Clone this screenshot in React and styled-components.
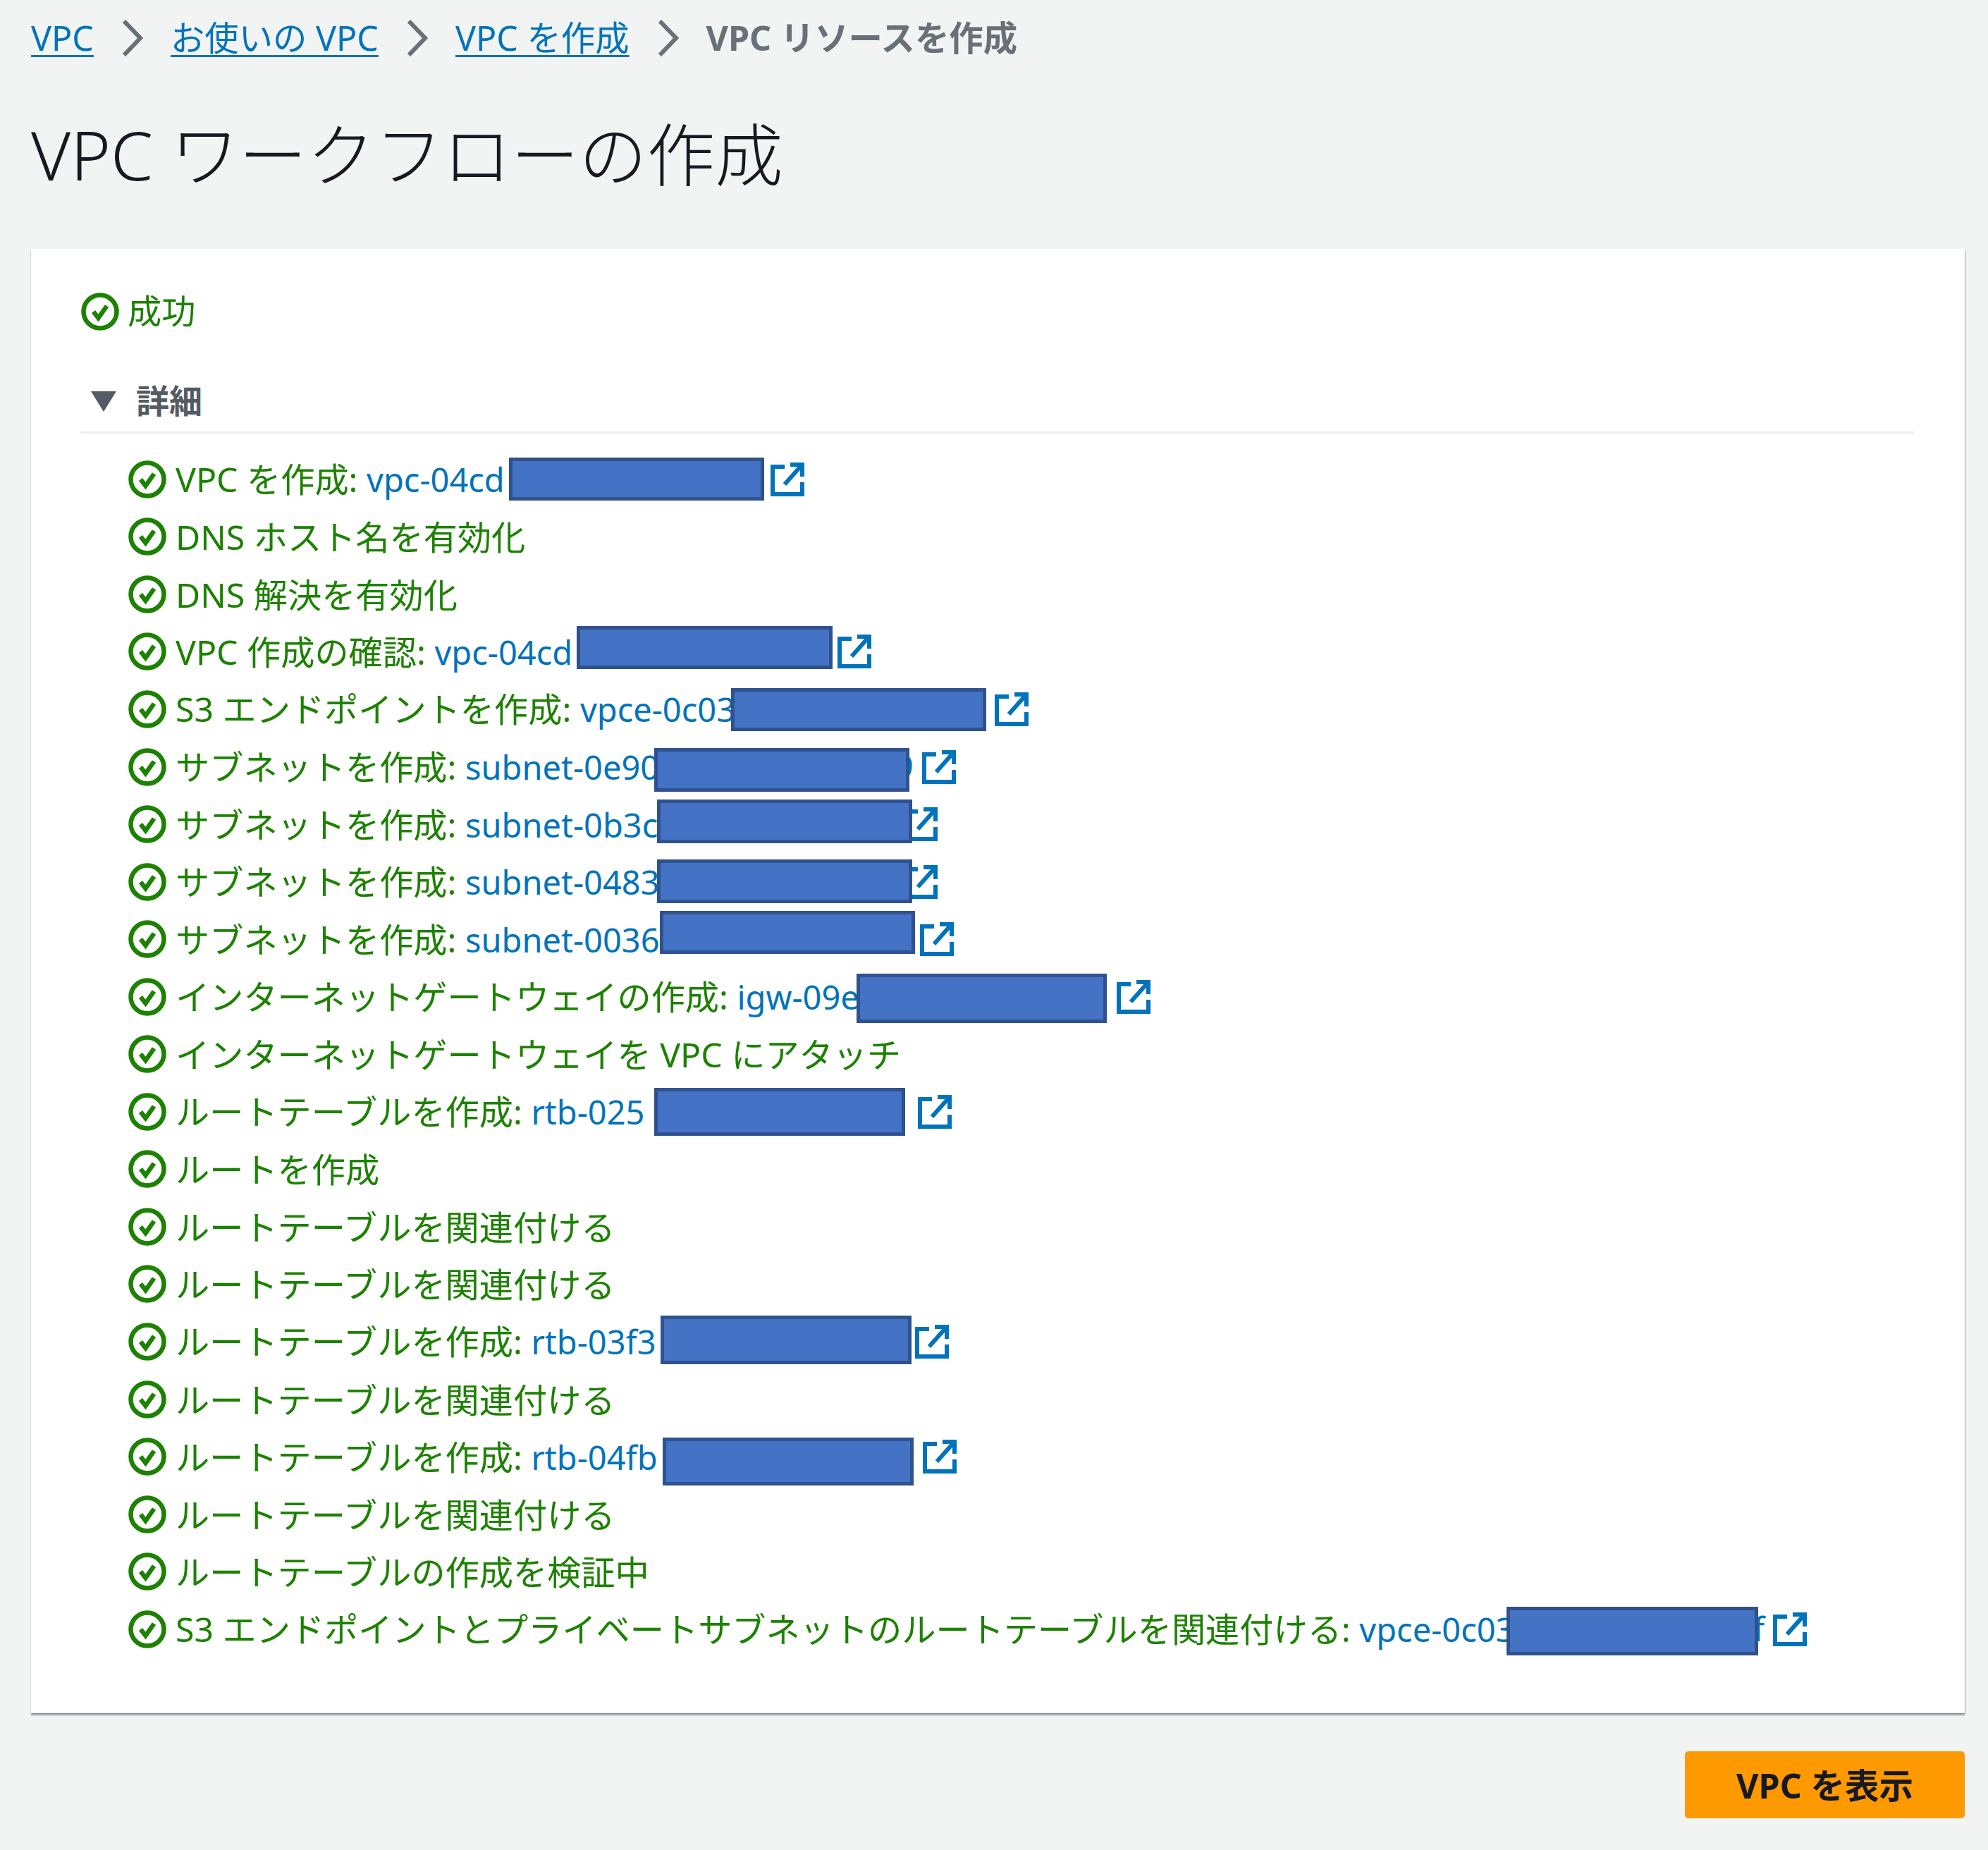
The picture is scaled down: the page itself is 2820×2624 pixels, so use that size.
import React from 'react'
import styled, { createGlobalStyle } from 'styled-components'

const GlobalStyle = createGlobalStyle`
  html, body {
    margin: 0;
    padding: 0;
    background: #f2f3f3;
  }
`

const Page = styled.div`
  width: 2820px;
  height: 2624px;
  box-sizing: border-box;
  padding: 0 33px 0 44px;
  background: #f2f3f3;
  font-family: "Noto Sans", "Noto Sans CJK JP", sans-serif;
  font-size: 48.2px;
`

const Crumbs = styled.nav`
  height: 108px;
  display: flex;
  align-items: center;
  gap: 39px;
  font-size: 48.4px;
`

const CrumbLink = styled.a`
  color: #0073bb;
  text-decoration: underline;
  text-decoration-thickness: 3px;
  text-underline-offset: 6px;
  line-height: 60px;
  margin-top: -2px;
`

const CrumbCurrent = styled.span`
  color: #687078;
  font-weight: 700;
  line-height: 60px;
  margin-top: -2px;
`

const Title = styled.h1`
  margin: 0;
  height: 245px;
  padding-top: 61px;
  box-sizing: border-box;
  font-size: 96.5px;
  line-height: 100px;
  font-weight: 300;
  color: #16191f;
`

const Card = styled.section`
  height: 2077px;
  box-sizing: border-box;
  padding: 62px 72px 0 71px;
  background: #fff;
  box-shadow: 0 3px 2px rgba(0, 28, 36, 0.35), 1px 1px 1px rgba(0, 28, 36, 0.2);
`

const StatusRow = styled.div`
  display: flex;
  align-items: center;
  gap: 12px;
  height: 54px;
  color: #1d8102;
`

const StatusLabel = styled.span`
  line-height: 54px;
  margin-top: -4px;
`

const DetailsHead = styled.div`
  display: flex;
  align-items: center;
  gap: 28px;
  margin-top: 72px;
  padding: 0 0 15px 14px;
  border-bottom: 3px solid #eaeded;
  height: 56px;
  color: #545b64;
  font-weight: 700;
  font-size: 47px;
`

const DetailsLabel = styled.span`
  line-height: 54px;
  margin-top: -3px;
`

const Caret = styled.span`
  width: 0;
  height: 0;
  border-left: 18px solid transparent;
  border-right: 18px solid transparent;
  border-top: 29px solid #545b64;
`

const List = styled.ul`
  list-style: none;
  margin: 24px 0 0;
  padding: 0 0 0 67px;
`

const Row = styled.li`
  position: relative;
  display: flex;
  align-items: center;
  height: 81.55px;
  color: #1d8102;
`

const RowText = styled.span`
  display: flex;
  justify-content: space-between;
  flex: none;
  margin-left: 13px;
  line-height: 60px;
  white-space: nowrap;
  width: ${p => (p.$width ? `${p.$width}px` : 'auto')};
`

const IdLink = styled.span`
  color: #0073bb;
  font-size: 47px;
`

const Tail = styled.span`
  color: #0073bb;
  font-size: 47px;
  margin-right: 12px;
`

const External = styled.svg`
  flex: none;
  width: 48px;
  height: 48px;
`

const Redaction = styled.div`
  position: absolute;
  box-sizing: border-box;
  left: ${p => p.$left}px;
  top: ${p => p.$top}px;
  width: ${p => p.$w}px;
  height: ${p => p.$h}px;
  background: #4472c4;
  border: 5px solid #2f528f;
`

const Actions = styled.div`
  display: flex;
  justify-content: flex-end;
  margin-top: 54px;
`

const PrimaryButton = styled.button`
  width: 397px;
  height: 95px;
  padding: 0 0 3px;
  border: 0;
  border-radius: 5px;
  background: #ff9900;
  color: #16191f;
  font: 700 48.5px "Noto Sans", "Noto Sans CJK JP", sans-serif;
`

const CheckIcon = ({ size = 54 }) => (
  <svg width={size} height={size} viewBox="0 0 54 54" fill="none" style={{ flex: 'none' }}>
    <circle cx="27" cy="27" r="23.5" stroke="#1d8102" strokeWidth="6.5" />
    <path d="M17.5 27l7 9 12-17" stroke="#1d8102" strokeWidth="6.5" />
  </svg>
)

const ExternalIcon = () => (
  <External viewBox="0 0 48 48" fill="none" stroke="#0073bb" strokeWidth="6">
    <path d="M20 6H3v39h42V28" />
    <path d="M28 3h17v17" />
    <path d="M44 4L20 31" />
  </External>
)

const Chevron = () => (
  <svg width="31" height="52" viewBox="0 0 31 52" fill="none" stroke="#687078" strokeWidth="6">
    <path d="M4 2l23 24L4 50" />
  </svg>
)

// rowLeft: where the list rows begin on the page
const ROW_LEFT = 182
const ROW_TOP = 639
const ROW_H = 81.55

const rows = [
  { label: 'VPC を作成: ', id: 'vpc-04cd', icon: 1093, box: [722, 1084, 649, 710] },
  { label: 'DNS ホスト名を有効化' },
  { label: 'DNS 解決を有効化' },
  { label: 'VPC 作成の確認: ', id: 'vpc-04cd', icon: 1188, box: [818, 1181, 888, 949] },
  { label: 'S3 エンドポイントを作成: ', id: 'vpce-0c03', icon: 1411, box: [1037, 1399, 976, 1037] },
  { label: 'サブネットを作成: ', id: 'subnet-0e90', tail: '9', icon: 1308, box: [928, 1290, 1061, 1123] },
  { label: 'サブネットを作成: ', id: 'subnet-0b3c', icon: 1282, box: [932, 1294, 1134, 1196] },
  { label: 'サブネットを作成: ', id: 'subnet-0483', icon: 1282, box: [932, 1294, 1219, 1281] },
  { label: 'サブネットを作成: ', id: 'subnet-0036', icon: 1305, box: [936, 1298, 1292, 1353] },
  { label: 'インターネットゲートウェイの作成: ', id: 'igw-09e', icon: 1584, box: [1215, 1570, 1381, 1451] },
  { label: 'インターネットゲートウェイを VPC にアタッチ' },
  { label: 'ルートテーブルを作成: ', id: 'rtb-025', icon: 1302, box: [928, 1284, 1543, 1611] },
  { label: 'ルートを作成' },
  { label: 'ルートテーブルを関連付ける' },
  { label: 'ルートテーブルを関連付ける' },
  { label: 'ルートテーブルを作成: ', id: 'rtb-03f3', icon: 1298, box: [937, 1293, 1866, 1935] },
  { label: 'ルートテーブルを関連付ける' },
  { label: 'ルートテーブルを作成: ', id: 'rtb-04fb', icon: 1309, box: [940, 1296, 2039, 2107] },
  { label: 'ルートテーブルを関連付ける' },
  { label: 'ルートテーブルの作成を検証中' },
  { label: 'S3 エンドポイントとプライベートサブネットのルートテーブルを関連付ける: ', id: 'vpce-0c03', tail: 'f', icon: 2515, box: [2137, 2494, 2279, 2348] },
]

const StepRow = ({ step, index }) => {
  const { label, id, tail, icon, box } = step
  // the text block ends where the link icon starts
  const width = icon ? icon - ROW_LEFT - 54 - 13 : undefined
  const rowY = ROW_TOP + ROW_H * index
  return (
    <Row>
      <CheckIcon />
      <RowText $width={width}>
        <span>
          {label}
          {id && <IdLink>{id}</IdLink>}
        </span>
        {tail && <Tail>{tail}</Tail>}
      </RowText>
      {icon && <ExternalIcon />}
      {box && (
        <Redaction
          $left={box[0] - ROW_LEFT}
          $top={box[2] - rowY}
          $w={box[1] - box[0]}
          $h={box[3] - box[2]}
        />
      )}
    </Row>
  )
}

export default function App() {
  return (
    <Page>
      <GlobalStyle />
      <Crumbs>
        <CrumbLink>VPC</CrumbLink>
        <Chevron />
        <CrumbLink>お使いの VPC</CrumbLink>
        <Chevron />
        <CrumbLink>VPC を作成</CrumbLink>
        <Chevron />
        <CrumbCurrent>VPC リソースを作成</CrumbCurrent>
      </Crumbs>
      <Title>VPC ワークフローの作成</Title>
      <Card>
        <StatusRow>
          <CheckIcon />
          <StatusLabel>成功</StatusLabel>
        </StatusRow>
        <DetailsHead>
          <Caret />
          <DetailsLabel>詳細</DetailsLabel>
        </DetailsHead>
        <List>
          {rows.map((step, i) => (
            <StepRow key={i} step={step} index={i} />
          ))}
        </List>
      </Card>
      <Actions>
        <PrimaryButton>VPC を表示</PrimaryButton>
      </Actions>
    </Page>
  )
}
